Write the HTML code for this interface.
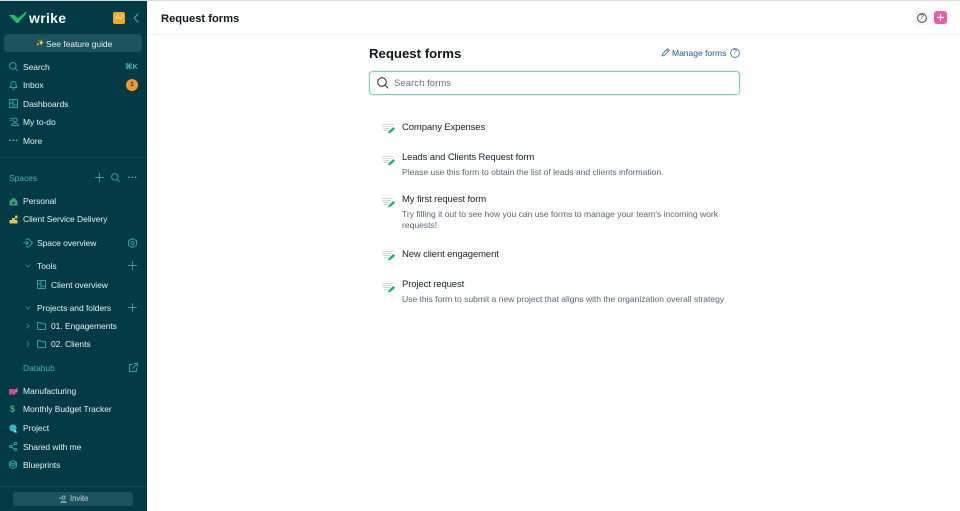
<!DOCTYPE html>
<html><head><meta charset="utf-8"><style>
html,body{margin:0;padding:0;background:#fff}
body{width:960px;height:511px;position:relative;overflow:hidden;font-family:"Liberation Sans",sans-serif}
.t{position:absolute;white-space:nowrap;line-height:12px;font-size:8.5px;letter-spacing:-.05px}
.s{color:#e6eeee}.a{color:#3fb3b5}
.c{color:#20242c;font-size:9.5px;letter-spacing:-.12px}
.d{color:#5b6577;font-size:8.6px;letter-spacing:-.03px}
svg{position:absolute;overflow:visible}
.i{fill:none;stroke:#2f9ea3;stroke-width:1;stroke-linecap:round;stroke-linejoin:round}
</style></head><body>
<div style="position:absolute;left:0;top:0;width:960px;height:1px;background:#d8dcdc"></div>
<div style="position:absolute;left:0;top:1px;width:147px;height:510px;background:#023b45"></div>
<div style="position:absolute;left:147px;top:34px;width:813px;height:1px;background:#f0f2f4"></div>
<div style="position:absolute;left:0;top:157px;width:147px;height:1px;background:#0e4b55"></div>
<div style="position:absolute;left:0;top:486px;width:147px;height:1px;background:#0e4b55"></div>

<svg style="left:8px;top:10px" width="20" height="14"><path d="M1 5L6.5 5L10 8.5L18.5 1L18 4L10 13H8.5Z" fill="#12c46b"/></svg>
<div class="t" style="left:29px;top:10px;font-size:14px;line-height:16px;font-weight:bold;color:#f2f6f6;letter-spacing:.3px">wrike</div>
<div style="position:absolute;left:113px;top:12px;width:12px;height:12px;background:#f5a623;border-radius:2px;color:#fff;font-size:6.5px;line-height:12px;text-align:center">AJ</div>
<svg style="left:132px;top:13px" width="8" height="10"><path class="i" d="M6 1L2 5L6 9" style="stroke:#3fb3b5"/></svg>

<div style="position:absolute;left:4px;top:34px;width:138px;height:18px;background:#1b525e;border-radius:4px"></div>
<div class="t" style="left:36px;top:38px;font-size:6.5px;letter-spacing:0">✨</div>
<div class="t s" style="left:46px;top:38px">See feature guide</div>

<svg style="left:9px;top:62px" width="9" height="9"><circle class="i" cx="3.8" cy="3.8" r="3.3"/><path class="i" d="M6.3 6.3L8.5 8.5"/></svg>
<div class="t s" style="left:23px;top:61px">Search</div>
<div class="t" style="left:125px;top:61px;color:#3fb3b5;font-size:7.5px;font-weight:bold">⌘K</div>
<svg style="left:9px;top:80px" width="9" height="10"><path class="i" d="M1 7.5C2 6.5 2 5 2 4A2.5 2.5 0 0 1 7 4C7 5 7 6.5 8 7.5ZM3.5 9H5.5"/></svg>
<div class="t s" style="left:23px;top:79px">Inbox</div>
<div style="position:absolute;left:126px;top:79px;width:12px;height:12px;background:#f5982a;border-radius:50%;color:#15333a;font-size:6.5px;line-height:12px;text-align:center;font-weight:bold">1</div>
<svg style="left:9px;top:99px" width="9" height="9"><path class="i" d="M.5.5H8.5V8.5H.5ZM4 .5V8.5M.5 4H4M4 6H8.5"/></svg>
<div class="t s" style="left:23px;top:98px">Dashboards</div>
<svg style="left:9px;top:117px" width="10" height="9"><circle class="i" cx="6" cy="3" r="2"/><path class="i" d="M2.5 8.5C3 6.5 4.5 6 6 6S9 6.5 9.5 8.5ZM1 1.5H3M1 3.5H2"/></svg>
<div class="t s" style="left:23px;top:116px">My to-do</div>
<svg style="left:9px;top:139px" width="9" height="3"><path d="M1 1.2h.01M4.3 1.2h.01M7.6 1.2h.01" class="i" style="stroke-width:1.5;stroke:#6fc4c6"/></svg>
<div class="t s" style="left:23px;top:135px">More</div>

<div class="t a" style="left:9px;top:172px">Spaces</div>
<svg style="left:95px;top:173px" width="9" height="9"><path class="i" d="M4.5.5V8.5M.5 4.5H8.5"/></svg>
<svg style="left:111px;top:173px" width="9" height="9"><circle class="i" cx="3.8" cy="3.8" r="3.3"/><path class="i" d="M6.3 6.3L8.5 8.5"/></svg>
<svg style="left:128px;top:176px" width="9" height="3"><path d="M1 1.2h.01M4.3 1.2h.01M7.6 1.2h.01" class="i" style="stroke-width:1.5;stroke:#6fc4c6"/></svg>

<svg style="left:9px;top:197px" width="9" height="9"><path d="M4.5.5L8.5 4V8.5H.5V4Z" fill="#3f9d6c"/><rect x="3.5" y="5" width="2" height="2" fill="#023b45"/></svg>
<div class="t s" style="left:23px;top:195px">Personal</div>
<svg style="left:9px;top:215px" width="9" height="9"><path d="M3 3H6V.5H8.5V3.5H6V5H8.5V8.5H.5V5H3Z" fill="#e3c24f"/></svg>
<div class="t s" style="left:23px;top:213px">Client Service Delivery</div>

<svg style="left:23px;top:238px" width="10" height="10"><path class="i" d="M.5 5H5M3.5 3.3L5.2 5L3.5 6.7M3 1.5L5.5.8L9.5 5L5.5 9.2L3 8.5"/></svg>
<div class="t s" style="left:37px;top:237px">Space overview</div>
<svg style="left:128px;top:238px" width="9" height="10"><path class="i" d="M4.5.5L8.5 2.7V7.3L4.5 9.5L.5 7.3V2.7Z"/><circle class="i" cx="4.5" cy="5" r="1.6"/></svg>

<svg style="left:25px;top:264px" width="6" height="4"><path class="i" d="M.8.8L3 3L5.2.8" style="stroke:#2a7f85"/></svg>
<div class="t s" style="left:37px;top:260px">Tools</div>
<svg style="left:128px;top:261px" width="9" height="9"><path class="i" d="M4.5.5V8.5M.5 4.5H8.5"/></svg>
<svg style="left:37px;top:280px" width="9" height="9"><path class="i" d="M.5.5H8.5V8.5H.5ZM4 .5V8.5M.5 4H4M4 6H8.5"/></svg>
<div class="t s" style="left:51px;top:279px">Client overview</div>

<svg style="left:25px;top:306px" width="6" height="4"><path class="i" d="M.8.8L3 3L5.2.8" style="stroke:#2a7f85"/></svg>
<div class="t s" style="left:37px;top:302px">Projects and folders</div>
<svg style="left:128px;top:303px" width="9" height="9"><path class="i" d="M4.5.5V8.5M.5 4.5H8.5"/></svg>
<svg style="left:26px;top:323px" width="4" height="6"><path class="i" d="M.8.8L3 3L.8 5.2" style="stroke:#2a7f85"/></svg>
<svg style="left:37px;top:322px" width="9" height="8"><path class="i" d="M.5 7.5V.5H3.5L4.5 1.7H8.5V7.5Z"/></svg>
<div class="t s" style="left:51px;top:320px">01. Engagements</div>
<svg style="left:26px;top:341px" width="4" height="6"><path class="i" d="M.8.8L3 3L.8 5.2" style="stroke:#2a7f85"/></svg>
<svg style="left:37px;top:340px" width="9" height="8"><path class="i" d="M.5 7.5V.5H3.5L4.5 1.7H8.5V7.5Z"/></svg>
<div class="t s" style="left:51px;top:338px">02. Clients</div>

<div class="t a" style="left:23px;top:362px">Datahub</div>
<svg style="left:129px;top:363px" width="9" height="9"><path class="i" d="M4 1.5H.5V8.5H7.5V5M4 5L8.5.5M5.5.5H8.5V3.5"/></svg>

<svg style="left:9px;top:387px" width="9" height="8"><rect x="0" y="2" width="6.5" height="5.5" fill="#c94b8a"/><path d="M6.5 3L8.5.5V5L6.5 6Z" fill="#e46da5"/></svg>
<div class="t s" style="left:23px;top:385px">Manufacturing</div>
<div class="t" style="left:10px;top:403px;color:#4caf70;font-size:9px;font-weight:bold">$</div>
<div class="t s" style="left:23px;top:403px">Monthly Budget Tracker</div>
<svg style="left:9px;top:424px" width="9" height="9"><circle cx="4" cy="4" r="3.6" fill="#36b5c0"/><path d="M5 5L8.5 8.5H5Z" fill="#8fdde0"/></svg>
<div class="t s" style="left:23px;top:422px">Project</div>
<svg style="left:9px;top:442px" width="8" height="9"><circle class="i" cx="1.5" cy="4.5" r="1.1"/><circle class="i" cx="6.5" cy="1.5" r="1.1"/><circle class="i" cx="6.5" cy="7.5" r="1.1"/><path class="i" d="M2.5 4L5.5 2M2.5 5L5.5 7"/></svg>
<div class="t s" style="left:23px;top:441px">Shared with me</div>
<svg style="left:9px;top:460px" width="8" height="9"><path class="i" d="M4 .5L7.5 2.3V6.7L4 8.5L.5 6.7V2.3ZM.5 4.2L4 6L7.5 4.2M.5 2.3L4 4L7.5 2.3"/></svg>
<div class="t s" style="left:23px;top:459px">Blueprints</div>

<div style="position:absolute;left:13px;top:492px;width:120px;height:14px;background:#1b525e;border-radius:3px"></div>
<svg style="left:59px;top:495px" width="8" height="8"><circle cx="4.5" cy="2.5" r="1.6" fill="none" stroke="#a9c5c8" stroke-width=".8"/><path d="M2 7.5C2.5 5.5 6.5 5.5 7 7.5Z" fill="none" stroke="#a9c5c8" stroke-width=".8"/><path d="M0 3H2M1 2V4" stroke="#a9c5c8" stroke-width=".6"/></svg>
<div class="t" style="left:70px;top:493px;color:#c3d6d8;font-size:7.8px">Invite</div>

<div class="t" style="left:161px;top:12px;font-size:11.2px;line-height:14px;font-weight:bold;color:#15181f;letter-spacing:0">Request forms</div>
<div style="position:absolute;left:915px;top:11px;width:14px;height:14px;background:#f3f5f8;border-radius:3px"></div>
<svg style="left:917px;top:13px" width="10" height="10"><circle cx="5" cy="5" r="4.4" fill="none" stroke="#3a3f48" stroke-width=".9"/></svg>
<div class="t" style="left:917px;top:12px;width:10px;text-align:center;font-size:7px;color:#3a3f48;letter-spacing:0">?</div>
<div style="position:absolute;left:934px;top:11px;width:13px;height:13px;background:#ea5da4;border-radius:3px"></div>
<svg style="left:936px;top:13px" width="9" height="9"><path d="M4.5 1V8M1 4.5H8" stroke="#fff" stroke-width="1.3"/></svg>

<div class="t" style="left:369px;top:46px;font-size:13.2px;line-height:16px;font-weight:bold;color:#13161d;letter-spacing:0">Request forms</div>
<svg style="left:661px;top:48px" width="9" height="9"><path d="M1 8L1.5 5.8L6.5.8L8.2 2.5L3.2 7.5ZM5.5 1.8L7.2 3.5" fill="none" stroke="#2e6da4" stroke-width=".8"/></svg>
<div class="t" style="left:672px;top:47px;font-size:8.5px;color:#1c5a91;letter-spacing:0">Manage forms</div>
<svg style="left:730px;top:48px" width="10" height="10"><circle cx="5" cy="5" r="4.4" fill="none" stroke="#2e6da4" stroke-width=".8"/></svg>
<div class="t" style="left:730px;top:47px;width:10px;text-align:center;font-size:7px;color:#2e6da4;letter-spacing:0">?</div>

<div style="position:absolute;left:369px;top:71px;width:369px;height:22px;border:1px solid #7dd3b8;border-radius:4px;box-shadow:0 0 0 1px #e2f5ee"></div>
<svg style="left:377px;top:77px" width="12" height="12"><circle cx="5" cy="5" r="4.3" fill="none" stroke="#20242c" stroke-width="1"/><path d="M8.2 8.2L11.3 11.3" stroke="#20242c" stroke-width="1"/></svg>
<div class="t" style="left:394px;top:78px;font-size:9.5px;color:#636d7e;letter-spacing:.05px">Search forms</div>

<svg width="0" height="0" style="left:0;top:0"><defs><g id="f"><path d="M0 .5H11M0 2.5H9M1 4.5H7.5M2 6.5H6" stroke="#d3d7dc" stroke-width=".9"/><path d="M5.8 9.5L6.8 7.2L11.2 3L13 4.8L8.5 8.8Z" fill="#10b566"/></g></defs></svg>
<svg style="left:382px;top:124px" width="13" height="10"><use href="#f"/></svg>
<div class="t c" style="left:402px;top:122px">Company Expenses</div>
<svg style="left:382px;top:156px" width="13" height="10"><use href="#f"/></svg>
<div class="t c" style="left:402px;top:152px">Leads and Clients Request form</div>
<div class="t d" style="left:402px;top:166px">Please use this form to obtain the list of leads and clients information.</div>
<svg style="left:382px;top:198px" width="13" height="10"><use href="#f"/></svg>
<div class="t c" style="left:402px;top:194px">My first request form</div>
<div class="t d" style="left:402px;top:208px">Try filling it out to see how you can use forms to manage your team's incoming work</div>
<div class="t d" style="left:402px;top:219px">requests!</div>
<svg style="left:382px;top:251px" width="13" height="10"><use href="#f"/></svg>
<div class="t c" style="left:402px;top:249px">New client engagement</div>
<svg style="left:382px;top:283px" width="13" height="10"><use href="#f"/></svg>
<div class="t c" style="left:402px;top:279px">Project request</div>
<div class="t d" style="left:402px;top:293px">Use this form to submit a new project that aligns with the organization overall strategy</div>
</body></html>
